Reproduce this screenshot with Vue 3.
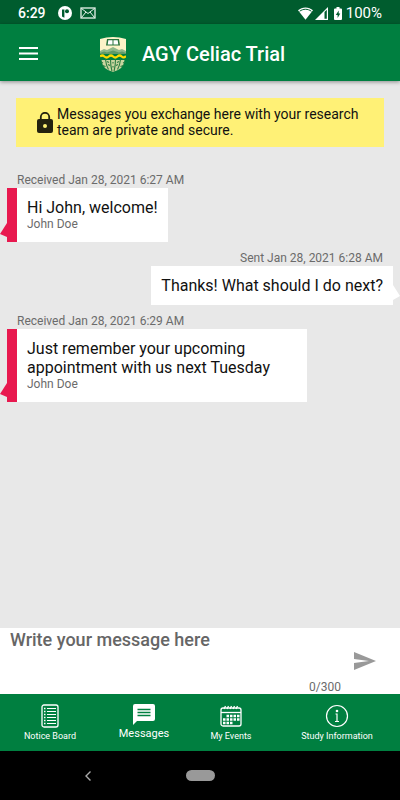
<template>
  <div class="app">
    <div class="status-bar">
      <span class="clock">6:29</span>
      <svg class="status-logo" viewBox="0 0 14 14" width="14" height="14">
        <circle cx="7" cy="7" r="7" fill="#fff" />
        <path d="M4 3.500h2.400v8.200L4 10.500z" fill="#005c2e" />
        <circle cx="9" cy="5.200" r="2" fill="#005c2e" />
      </svg>
      <svg class="status-mail" viewBox="0 0 16 12" width="16" height="12" fill="none" stroke="#e8f3ec">
        <rect x="1" y="1" width="14" height="10" stroke-width="1.300" />
        <path d="M1.500 1.500L8 6.500l6.500-5M1.500 10.500L6 5M14.500 10.500L10 5" />
      </svg>
      <div class="status-right">
        <svg viewBox="0 0 15 13" width="15" height="13">
          <path d="M0 3.300C4-.6 11-.6 15 3.300L7.500 12.800z" fill="#fff" />
          <path d="M1.600 4.300C5 1.600 10 1.600 13.400 4.300" fill="none" stroke="#005c2e" />
        </svg>
        <svg viewBox="0 0 13 13" width="13" height="13">
          <path d="M0 13L13 0v13z" fill="#fff" />
          <path d="M9.500 5L11.800 2.800v9H9.500z" fill="#005c2e" />
        </svg>
        <svg class="battery" viewBox="0 0 8 13" width="8" height="13">
          <path d="M2.500 0h3v1.500H7a1 1 0 0 1 1 1V12a1 1 0 0 1-1 1H1a1 1 0 0 1-1-1V2.500a1 1 0 0 1 1-1h1.500z" fill="#fff" />
          <path d="M4.700 3.500L1.800 8h1.800v3L6.300 6.500H4.700z" fill="#005c2e" />
        </svg>
        <span class="percent">100%</span>
      </div>
    </div>

    <header class="app-bar">
      <button class="menu-button" type="button" aria-label="Menu">
        <svg viewBox="0 0 19 13" width="19" height="13">
          <path d="M0 1h19M0 6.500h19M0 12h19" stroke="#fff" stroke-width="2" />
        </svg>
      </button>
      <svg class="crest" viewBox="0 0 26 36" width="26" height="36">
        <path d="M0 3Q13-1 26 3V15H0z" fill="#fcf3c8" />
        <path d="M7 3h12l1 6.500H6z" fill="#28743c" />
        <path d="M8.300 4.300h4.200v4.200H7.700zM13.500 4.300h4.200l.6 4.200h-4.800z" fill="#fff" />
        <path d="M0 15l4-2 3 1 6-3 6 3 3-1 4 2v2H0z" fill="#8fb88a" />
        <path d="M0 17l4-1.500 3 1 6-2 6 2 3-1 4 1.500v1H0z" fill="#5d9a68" />
        <path d="M0 20.500q2.200-2 4.400 0t4.400 0 4.300 0 4.300 0 4.300 0 4.300-.5" fill="none" stroke="#ffd900" stroke-width="2.200" />
        <path d="M1.500 24h23Q24 33 13 36 2 33 1.500 24z" fill="#c9d5a0" />
        <g stroke="#2c7d41" stroke-width="1.100" fill="none">
          <path d="M5.500 23.500q.5 5.500 3 10M10.500 23.500q0 6 1.500 12M15.500 23.500q0 6-1.500 12M20.500 23.500q-.5 5.500-3 10" />
          <path d="M1 26l2 1M7 25.500l2 1M17 26.500l2-1M23 27l2-1M2.500 29.500l3 1M8 28.500l2 1M16 29.500l2-1M20.500 30.500l3-1M13 26v1.500M13 30v1.500" />
        </g>
      </svg>
      <h1 class="title">AGY Celiac Trial</h1>
    </header>

    <main class="conversation">
      <div class="notice">
        <svg class="lock" viewBox="0 0 16 21" width="16" height="21">
          <path d="M3.800 8V5a4.200 4.200 0 0 1 8.400 0v3" fill="none" stroke="#24220f" stroke-width="1.800" />
          <rect x="0" y="7" width="16" height="14" rx="2" fill="#24220f" />
          <circle cx="8" cy="14" r="2" fill="#fff176" />
        </svg>
        <p>Messages you exchange here with your research team are private and secure.</p>
      </div>

      <section
        v-for="message in messages"
        :key="message.id"
        class="message"
        :class="message.sent ? 'sent' : 'received'"
      >
        <div class="meta">{{ message.sent ? 'Sent' : 'Received' }} {{ message.date }}</div>
        <div class="bubble">
          <svg class="tail" viewBox="0 0 7 16" width="7" height="16">
            <path v-if="message.sent" d="M0 0L7 11 0 15z" fill="#fff" />
            <path v-else d="M7 1L0 12l7 3z" fill="#e8194f" />
          </svg>
          <p class="text">{{ message.text }}</p>
          <p v-if="message.author" class="author">{{ message.author }}</p>
        </div>
      </section>
    </main>

    <form class="composer" @submit.prevent="sendMessage">
      <div class="field">
        <textarea
          v-model="draft"
          :maxlength="maxLength"
          placeholder="Write your message here"
          aria-label="Write your message here"
        ></textarea>
        <span class="counter">{{ draft.length }}/{{ maxLength }}</span>
      </div>
      <button class="send-button" type="submit" aria-label="Send">
        <svg viewBox="0 0 22 18" width="22" height="18">
          <path d="M0 0L22 9 0 18v-7l15-2L0 7z" fill="#999" />
        </svg>
      </button>
    </form>

    <nav class="tabs">
      <a href="#notices" class="tab tab-notices">
        <svg viewBox="0 0 18 24" width="18" height="24" fill="none" stroke="#fff">
          <rect x="1" y="1" width="16" height="22" rx="2" stroke-width="1.300" />
          <path d="M6 4.500h9M6 7.500h9M6 10.500h9M6 13.500h9M6 16.500h9M6 19.500h9" stroke-width="1.200" />
          <path d="M3 4.500h1.500M3 7.500h1.500M3 10.500h1.500M3 13.500h1.500M3 16.500h1.500M3 19.500h1.500" stroke-width="1.400" />
        </svg>
        <span>Notice Board</span>
      </a>
      <a href="#messages" class="tab tab-messages active">
        <svg viewBox="0 0 22 22" width="22" height="22">
          <path d="M2 0h18a2 2 0 0 1 2 2v13a2 2 0 0 1-2 2H4l-4 4V2a2 2 0 0 1 2-2z" fill="#fff" />
          <path d="M4.500 5.500h13M4.500 8.500h13M4.500 11.500h13" stroke="#007f40" stroke-width="1.400" />
        </svg>
        <span>Messages</span>
      </a>
      <a href="#events" class="tab tab-events">
        <svg viewBox="0 0 22 24" width="22" height="24" fill="none" stroke="#fff">
          <rect x="1" y="4" width="20" height="18" rx="2" stroke-width="1.300" />
          <path d="M1 8.500h20" stroke-width="1.300" />
          <path d="M4 5l1.500-3M7 5l1.500-3M10 5l1.500-3M13 5l1.500-3M16 5l1.500-3" stroke-width="1.300" />
          <path d="M6.500 12h13M3 15.500h16.500M3 19h10" stroke-width="2.400" stroke-dasharray="2.500 1" />
        </svg>
        <span>My Events</span>
      </a>
      <a href="#study" class="tab tab-study">
        <svg viewBox="0 0 24 24" width="24" height="24" fill="none" stroke="#fff">
          <circle cx="12" cy="12" r="10.500" stroke-width="1.200" />
          <path d="M10.500 10H12v7.500M10 17.500h4" stroke-width="1.200" />
          <circle cx="12" cy="7" r="1.300" fill="#fff" stroke="none" />
        </svg>
        <span>Study Information</span>
      </a>
    </nav>

    <div class="system-bar">
      <button class="back-button" type="button" aria-label="Back">
        <svg viewBox="0 0 6 10" width="6" height="10">
          <path d="M5.500.5L1 5l4.500 4.500" fill="none" stroke="#aaa" stroke-width="1.400" />
        </svg>
      </button>
      <button class="home-button" type="button" aria-label="Home"></button>
    </div>
  </div>
</template>

<script setup>
import { ref } from 'vue'

const maxLength = 300
const draft = ref('')

const messages = ref([
  { id: 1, sent: false, date: 'Jan 28, 2021 6:27 AM', text: 'Hi John, welcome!', author: 'John Doe' },
  { id: 2, sent: true, date: 'Jan 28, 2021 6:28 AM', text: 'Thanks! What should I do next?' },
  {
    id: 3,
    sent: false,
    date: 'Jan 28, 2021 6:29 AM',
    text: 'Just remember your upcoming appointment with us next Tuesday',
    author: 'John Doe'
  }
])

function formatDate(date) {
  const day = date.toLocaleDateString('en-US', { month: 'short', day: 'numeric', year: 'numeric' })
  const time = date.toLocaleTimeString('en-US', { hour: 'numeric', minute: '2-digit' })
  return `${day} ${time}`
}

function sendMessage() {
  const text = draft.value.trim()
  if (!text) return
  messages.value.push({ id: messages.value.length + 1, sent: true, date: formatDate(new Date()), text })
  draft.value = ''
}
</script>

<style>
body {
  background: #e8e8e8;
}
</style>

<style scoped>
.app {
  display: flex;
  flex-direction: column;
  min-height: 100vh;
  font-family: Roboto, 'Liberation Sans', sans-serif;
  background: #e8e8e8;
  color: #111;
}

svg {
  display: block;
  flex: none;
}

p,
h1 {
  margin: 0;
}

button {
  display: flex;
  padding: 0;
  border: none;
  background: none;
  cursor: pointer;
}

.status-bar {
  display: flex;
  align-items: center;
  box-sizing: border-box;
  height: 24px;
  padding: 2px 18px 0;
  background: #005c2e;
  color: #fff;
  font-size: 14px;
  font-weight: 500;
}

.status-logo {
  margin-left: 12px;
}

.status-mail {
  margin-left: 8px;
}

.status-right {
  display: flex;
  align-items: center;
  gap: 2px;
  margin-left: auto;
}

.battery {
  margin: 0 2px 0 4px;
}

.percent {
  font-size: 15px;
  font-weight: 400;
}

.app-bar {
  display: flex;
  align-items: center;
  box-sizing: border-box;
  height: 57px;
  padding: 2px 19px 0;
  background: #007f40;
  box-shadow: 0 1px 4px rgba(0, 0, 0, 0.4);
  z-index: 1;
}

.crest {
  margin-left: 62px;
}

.title {
  margin-left: 16px;
  color: #fff;
  font-size: 20px;
  font-weight: 500;
  line-height: 26px;
}

.conversation {
  display: flex;
  flex: 1;
  flex-direction: column;
  padding-top: 17px;
}

.notice {
  display: flex;
  align-items: center;
  margin: 0 16px 26px;
  padding: 8px 16px 8px 21px;
  background: #fff176;
  font-size: 14px;
  line-height: 16px;
}

.notice p {
  padding-bottom: 1px;
}

.lock {
  margin-right: 4px;
}

.message {
  display: flex;
  flex-direction: column;
  align-items: flex-start;
  padding: 0 7px;
  margin-bottom: 9px;
}

.meta {
  padding: 0 10px;
  color: #6b6b6b;
  font-size: 12px;
  line-height: 15px;
}

.bubble {
  position: relative;
  box-sizing: border-box;
  max-width: 300px;
  padding: 10px;
  background: #fff;
}

.received .bubble {
  border-left: 10px solid #e8194f;
}

.sent {
  align-items: flex-end;
}

.tail {
  position: absolute;
  right: -7px;
  bottom: 4px;
}

.received .tail {
  right: auto;
  left: -17px;
}

.text {
  font-size: 16px;
  line-height: 19px;
}

.author {
  color: #6b6b6b;
  font-size: 12px;
  line-height: 15px;
}

.composer {
  display: flex;
  align-items: center;
  height: 66px;
  padding-right: 24px;
  background: #fff;
}

.field {
  display: flex;
  flex: 1;
  flex-direction: column;
  height: 66px;
  margin-right: 13px;
}

textarea {
  flex: 1;
  padding: 2px 0 0 10px;
  border: none;
  outline: none;
  resize: none;
  background: none;
  color: #111;
  font-family: inherit;
  font-size: 18px;
  font-weight: 500;
  line-height: 20px;
}

textarea::placeholder {
  color: #666;
}

.counter {
  align-self: flex-end;
  color: #6b6b6b;
  font-size: 12px;
  line-height: 14px;
}

.tabs {
  display: flex;
  height: 57px;
  background: #007f40;
}

.tab {
  display: flex;
  flex-direction: column;
  align-items: center;
  padding-top: 10px;
  color: #fff;
  font-size: 9px;
  line-height: 12px;
  text-decoration: none;
}

.tab svg {
  margin-bottom: 2px;
}

.tab.active {
  font-size: 11px;
}

.tab-notices {
  flex: 100;
}

.tab-messages {
  flex: 88;
}

.tab-events {
  flex: 86;
}

.tab-study {
  flex: 126;
}

.system-bar {
  display: grid;
  grid-template-columns: 1fr auto 1fr;
  align-items: center;
  height: 49px;
  background: #000;
}

.back-button {
  justify-self: center;
  margin-right: 10px;
}

.home-button {
  width: 29px;
  height: 11px;
  border-radius: 6px;
  background: #999;
}
</style>
